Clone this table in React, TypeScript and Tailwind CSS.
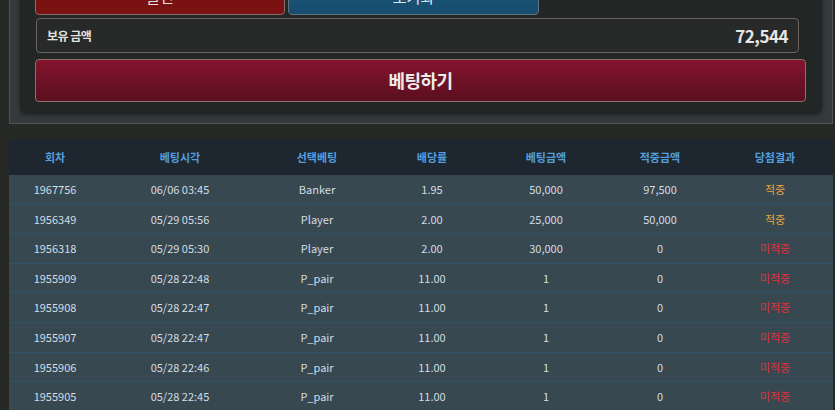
import React from "react";

const rows = [
  { no: "1967756", time: "06/06 03:45", pick: "Banker", odds: "1.95", bet: "50,000", win: "97,500", hit: true },
  { no: "1956349", time: "05/29 05:56", pick: "Player", odds: "2.00", bet: "25,000", win: "50,000", hit: true },
  { no: "1956318", time: "05/29 05:30", pick: "Player", odds: "2.00", bet: "30,000", win: "0", hit: false },
  { no: "1955909", time: "05/28 22:48", pick: "P_pair", odds: "11.00", bet: "1", win: "0", hit: false },
  { no: "1955908", time: "05/28 22:47", pick: "P_pair", odds: "11.00", bet: "1", win: "0", hit: false },
  { no: "1955907", time: "05/28 22:47", pick: "P_pair", odds: "11.00", bet: "1", win: "0", hit: false },
  { no: "1955906", time: "05/28 22:46", pick: "P_pair", odds: "11.00", bet: "1", win: "0", hit: false },
  { no: "1955905", time: "05/28 22:45", pick: "P_pair", odds: "11.00", bet: "1", win: "0", hit: false },
];

const cols = ["w-[92px]", "w-[158px]", "w-[116px]", "w-[114px]", "w-[114px]", "w-[114px]", "w-[116px]"];
const heads = ["회차", "베팅시각", "선택베팅", "배당률", "베팅금액", "적중금액", "당첨결과"];

export default function App() {
  return (
    <div className="min-h-screen bg-[#262826] font-['Noto_Sans_CJK_KR','Noto_Sans',sans-serif] overflow-hidden">
      <div className="-mt-[30px] ml-[9px] w-[824px] border border-[#4f5553] bg-[#353b3c] px-[10px] pb-[10px]">
        <div className="rounded-b-md bg-[#222726] pt-[8px] pb-[11px] pl-[15px] pr-[16px] shadow-[0_2px_4px_rgba(0,0,0,0.45)]">
          <div className="flex gap-[3px]">
            <button className="flex h-[36px] w-[250px] items-center justify-center rounded-[4px] border border-[#8a6d68] bg-[#7b1212] text-[15px] text-[#e8e0e0]">
              올인
            </button>
            <button className="flex h-[36px] w-[251px] items-center justify-center rounded-[4px] border border-[#5f7480] bg-gradient-to-b from-[#1b5a80] to-[#174c6c] text-[15px] text-[#e0e8ee]">
              초기화
            </button>
          </div>
          <div className="ml-[1px] mr-[7px] mt-[3px] flex h-[35px] items-center justify-between rounded-[4px] border border-[#6a645c] bg-[#272a28] px-[10px]">
            <span className="text-[12px] font-bold text-[#e2e2e2] tracking-[-0.5px]">보유 금액</span>
            <span className="text-[17px] font-bold text-[#e6e6e6] tracking-[-0.5px]">72,544</span>
          </div>
          <button className="mt-[6px] flex h-[43px] w-full items-center justify-center rounded-[4px] border border-[#8c706a] bg-gradient-to-b from-[#84142e] to-[#5a0f1f] text-[18px] font-bold text-[#ececec] tracking-[-0.5px]">
            베팅하기
          </button>
        </div>
      </div>

      <div className="ml-[9px] mt-[15px] w-[824px]">
        <div className="flex h-[36px] items-center bg-[#1e2630]">
          {heads.map((h, i) => (
            <div key={h} className={`${cols[i]} text-center text-[11px] font-bold text-[#529fdc]`}>
              {h}
            </div>
          ))}
        </div>
        {rows.map((r) => (
          <div key={r.no + r.time} className="flex h-[29.6px] items-center border-b border-[#2e5366] bg-[#374851] text-[11px] text-[#d3dde4]">
            <div className={`${cols[0]} text-center`}>{r.no}</div>
            <div className={`${cols[1]} text-center`}>{r.time}</div>
            <div className={`${cols[2]} text-center`}>{r.pick}</div>
            <div className={`${cols[3]} text-center`}>{r.odds}</div>
            <div className={`${cols[4]} text-center`}>{r.bet}</div>
            <div className={`${cols[5]} text-center`}>{r.win}</div>
            <div className={`${cols[6]} text-center ${r.hit ? "text-[#e9a43c]" : "text-[#e0313b]"}`}>
              {r.hit ? "적중" : "미적중"}
            </div>
          </div>
        ))}
      </div>
    </div>
  );
}
